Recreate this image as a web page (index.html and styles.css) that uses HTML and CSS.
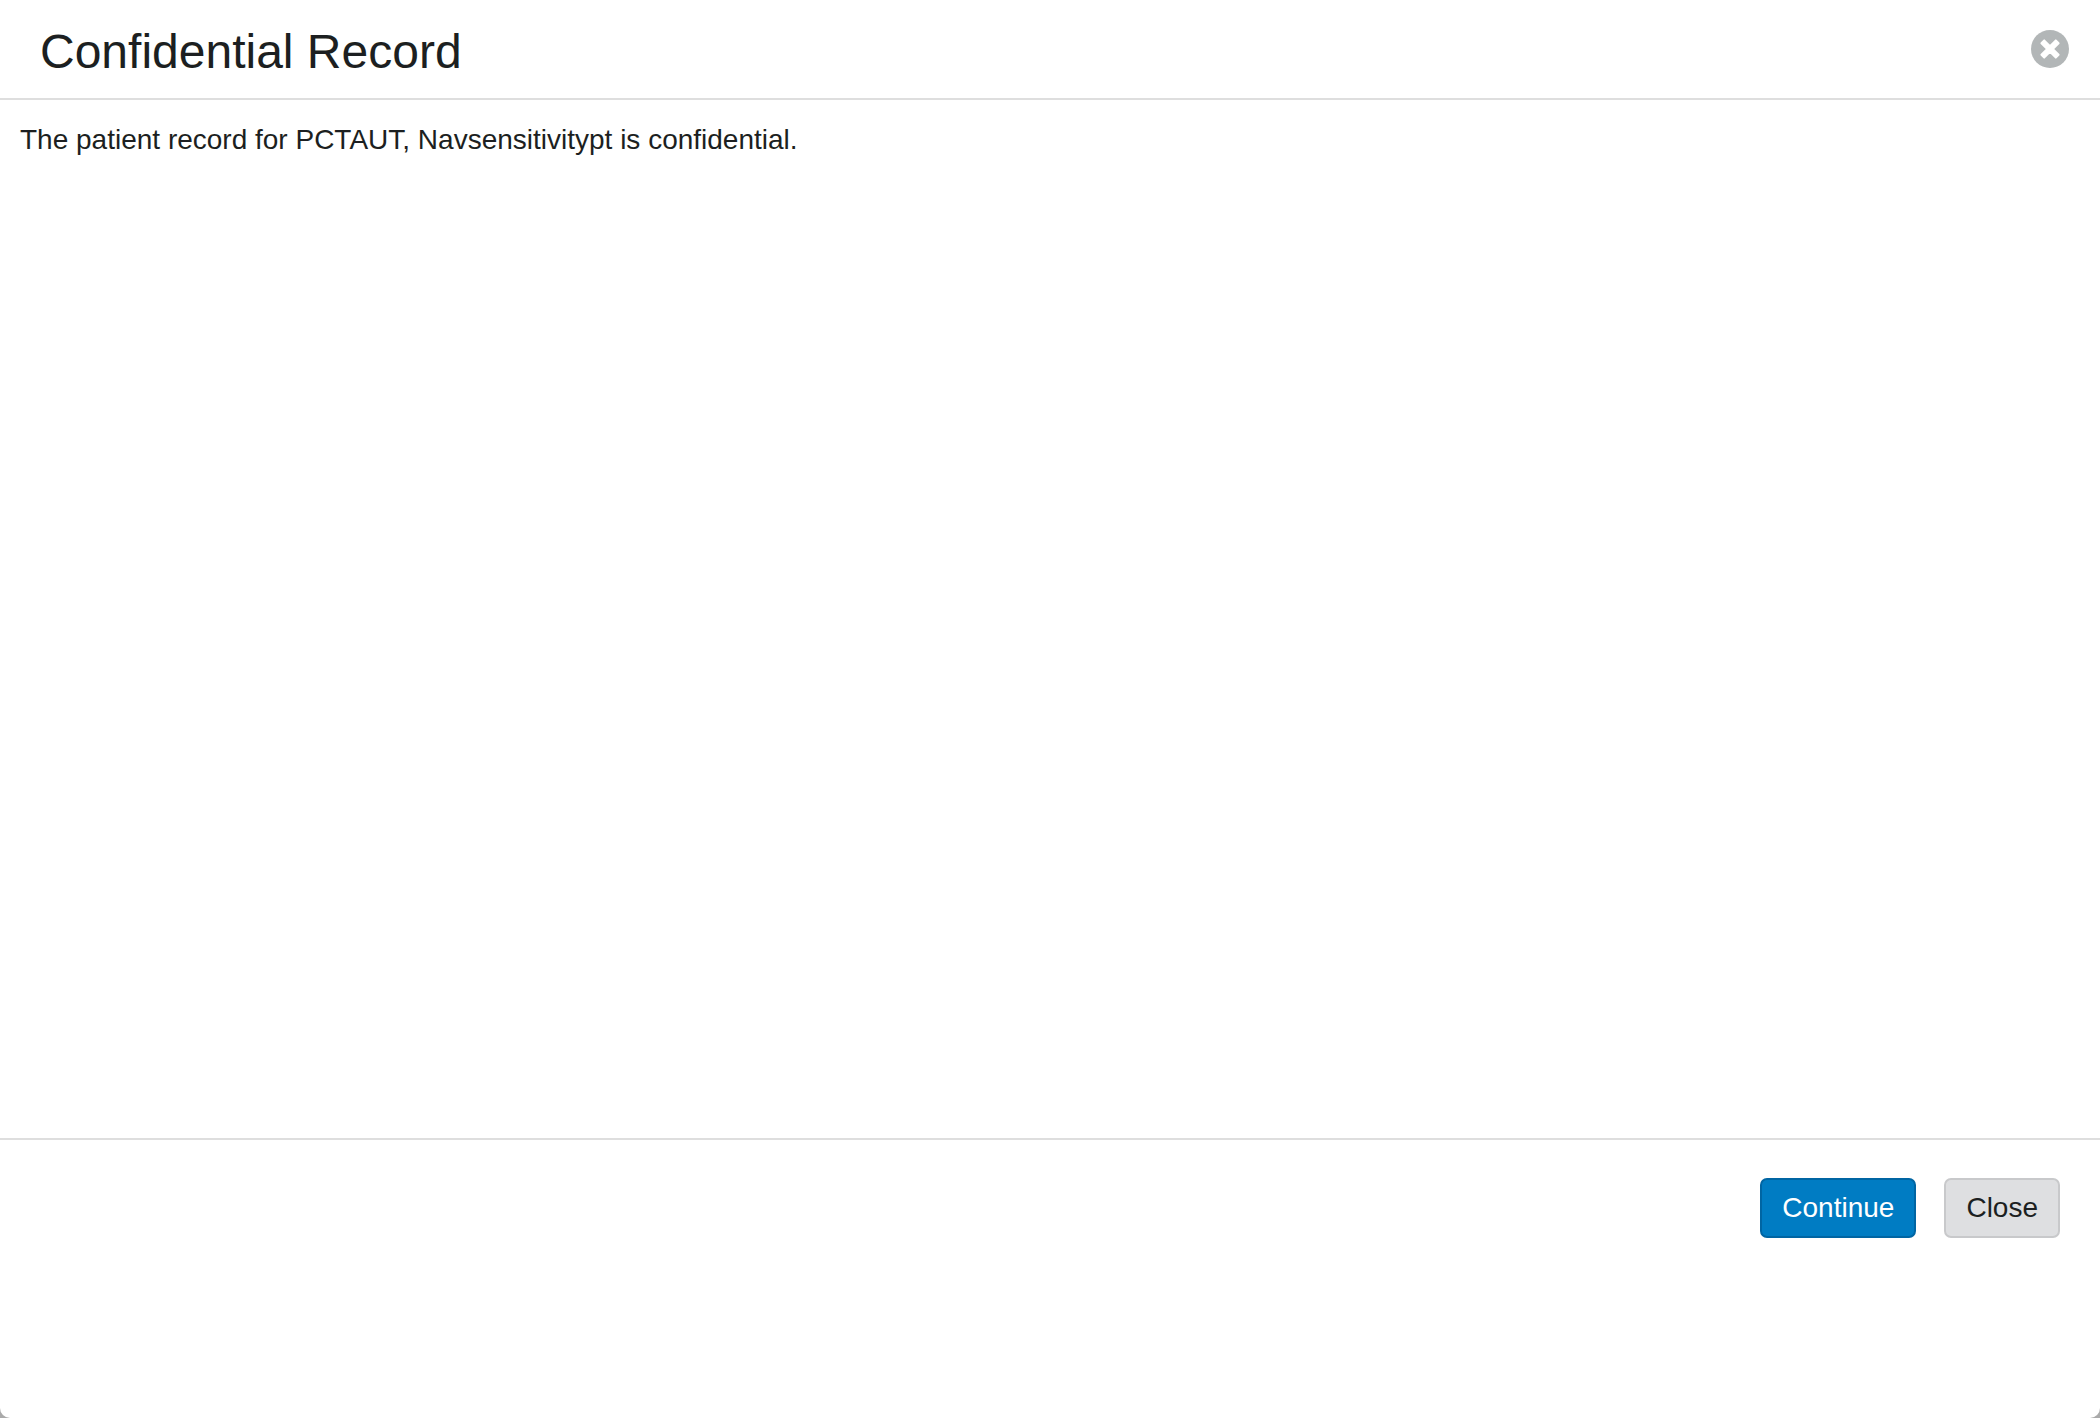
FILE: index.html
```html
<!DOCTYPE html>
<html lang="en">
<head>
<meta charset="utf-8">
<meta name="viewport" content="width=device-width, initial-scale=1">
<title>Confidential Record</title>
<link rel="stylesheet" href="styles.css">
</head>
<body>
<div class="dialog" role="dialog" aria-labelledby="dialog-title">
  <header class="dialog-header">
    <h1 class="dialog-title" id="dialog-title">Confidential Record</h1>
    <button class="dismiss" type="button" aria-label="Dismiss">
      <svg class="dismiss-icon" viewBox="0 0 38 38" aria-hidden="true">
        <circle cx="19" cy="19" r="19" fill="#b2b6b7"/>
        <path d="M13.200 10.400L19 16.200L24.800 10.400L27.600 13.200L21.800 19L27.600 24.800L24.800 27.600L19 21.800L13.200 27.600L10.400 24.800L16.200 19L10.400 13.200Z" fill="#fff" stroke="#fff" stroke-width="2" stroke-linejoin="round"/>
      </svg>
    </button>
  </header>
  <main class="dialog-body">
    <p class="message">The patient record for PCTAUT, Navsensitivitypt is confidential.</p>
  </main>
  <footer class="dialog-footer">
    <button class="btn btn-primary" type="button">Continue</button>
    <button class="btn" type="button">Close</button>
  </footer>
</div>
</body>
</html>
```
FILE: styles.css
```css
* {
  box-sizing: border-box;
}

body {
  margin: 0;
  background: #aaa;
  color: #1c1f21;
  font: 28px/40px "Helvetica Neue", "Liberation Sans", Arial, sans-serif;
}

.dialog {
  display: flex;
  flex-direction: column;
  min-height: 100vh;
  background: #fff;
  border-radius: 0 0 10px 10px;
}

.dialog-header {
  display: flex;
  align-items: center;
  justify-content: space-between;
  padding: 20px 31px 20px 40px;
  border-bottom: 2px solid #dedede;
}

.dialog-title {
  margin: 0;
  padding-top: 6px;
  font-size: 48px;
  font-weight: 400;
  line-height: 52px;
}

.dismiss {
  display: flex;
  padding: 0;
  border: 0;
  background: none;
  cursor: pointer;
}

.dismiss-icon {
  width: 38px;
  height: 38px;
}

.dialog-body {
  flex: 1;
  padding: 20px;
}

.message {
  margin: 0;
}

.dialog-footer {
  display: flex;
  align-items: flex-start;
  justify-content: flex-end;
  gap: 28px;
  min-height: 280px;
  padding: 38px 40px;
  border-top: 2px solid #dedede;
}

.btn {
  padding: 8px 20px;
  border: 2px solid #c8c9cb;
  border-radius: 7px;
  background: #dedfe1;
  color: inherit;
  font: inherit;
  cursor: pointer;
}

.btn-primary {
  border-color: #0065a3;
  background: #007cc3;
  color: #fff;
}
```
